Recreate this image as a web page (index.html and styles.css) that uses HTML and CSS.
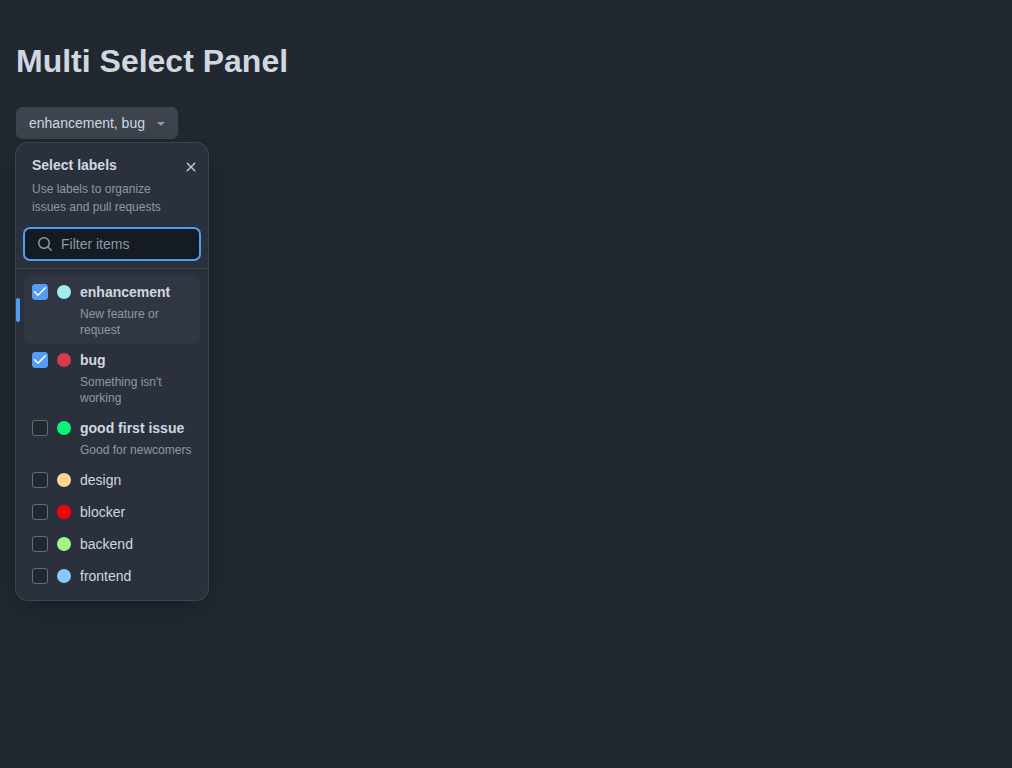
FILE: index.html
```html
<!DOCTYPE html>
<html lang="en">
<head>
<meta charset="utf-8">
<meta name="viewport" content="width=device-width, initial-scale=1">
<title>Multi Select Panel</title>
<link rel="stylesheet" href="styles.css">
</head>
<body>
<main class="page">
  <h1 class="page-title">Multi Select Panel</h1>
  <div class="select">
    <button class="select-button" type="button" aria-haspopup="dialog" aria-expanded="true">
      <span>enhancement, bug</span>
      <svg class="icon" viewBox="0 0 16 16" aria-hidden="true"><path d="m4.427 7.427 3.396 3.396a.25.25 0 0 0 .354 0l3.396-3.396A.25.25 0 0 0 11.396 7H4.604a.25.25 0 0 0-.177.427Z"/></svg>
    </button>
    <section class="panel" role="dialog" aria-labelledby="panel-title" aria-describedby="panel-description">
      <header class="panel-header">
        <div class="panel-heading">
          <h2 class="panel-title" id="panel-title">Select labels</h2>
          <p class="panel-description" id="panel-description">Use labels to organize issues and pull requests</p>
        </div>
        <button class="close-button" type="button" aria-label="Close">
          <svg class="icon" viewBox="0 0 16 16" aria-hidden="true"><path d="M3.72 3.72a.75.75 0 0 1 1.06 0L8 6.94l3.22-3.22a.749.749 0 0 1 1.275.326.749.749 0 0 1-.215.734L9.06 8l3.22 3.22a.749.749 0 0 1-.326 1.275.749.749 0 0 1-.734-.215L8 9.06l-3.22 3.22a.751.751 0 0 1-1.042-.018.751.751 0 0 1-.018-1.042L6.94 8 3.72 4.78a.75.75 0 0 1 0-1.06Z"/></svg>
        </button>
      </header>
      <div class="filter">
        <svg class="icon" viewBox="0 0 16 16" aria-hidden="true"><path d="M10.68 11.74a6 6 0 0 1-7.922-8.982 6 6 0 0 1 8.982 7.922l3.04 3.04a.749.749 0 0 1-.326 1.275.749.749 0 0 1-.734-.215ZM11.5 7a4.499 4.499 0 1 0-8.997 0A4.499 4.499 0 0 0 11.5 7Z"/></svg>
        <input class="filter-input" type="text" placeholder="Filter items" aria-label="Filter items">
      </div>
      <ul class="items">
        <li><label class="item item-active">
          <span class="check"><input class="checkbox" type="checkbox" checked><svg class="check-mark" viewBox="0 0 16 16" aria-hidden="true"><path d="M2.6 7.8 6 11.2 13.4 3.8"/></svg></span>
          <span class="dot dot-enhancement"></span>
          <span class="item-text"><span class="item-name item-name-strong">enhancement</span><span class="item-description">New feature or request</span></span>
        </label></li>
        <li><label class="item">
          <span class="check"><input class="checkbox" type="checkbox" checked><svg class="check-mark" viewBox="0 0 16 16" aria-hidden="true"><path d="M2.6 7.8 6 11.2 13.4 3.8"/></svg></span>
          <span class="dot dot-bug"></span>
          <span class="item-text"><span class="item-name item-name-strong">bug</span><span class="item-description">Something isn't working</span></span>
        </label></li>
        <li><label class="item">
          <span class="check"><input class="checkbox" type="checkbox"></span>
          <span class="dot dot-good-first-issue"></span>
          <span class="item-text"><span class="item-name item-name-strong">good first issue</span><span class="item-description">Good for newcomers</span></span>
        </label></li>
        <li><label class="item">
          <span class="check"><input class="checkbox" type="checkbox"></span>
          <span class="dot dot-design"></span>
          <span class="item-text"><span class="item-name">design</span></span>
        </label></li>
        <li><label class="item">
          <span class="check"><input class="checkbox" type="checkbox"></span>
          <span class="dot dot-blocker"></span>
          <span class="item-text"><span class="item-name">blocker</span></span>
        </label></li>
        <li><label class="item">
          <span class="check"><input class="checkbox" type="checkbox"></span>
          <span class="dot dot-backend"></span>
          <span class="item-text"><span class="item-name">backend</span></span>
        </label></li>
        <li><label class="item">
          <span class="check"><input class="checkbox" type="checkbox"></span>
          <span class="dot dot-frontend"></span>
          <span class="item-text"><span class="item-name">frontend</span></span>
        </label></li>
      </ul>
    </section>
  </div>
</main>
</body>
</html>
```

FILE: styles.css
```css
* { box-sizing: border-box; }

body {
  margin: 0;
  background: #212830;
  color: #d1d7e0;
  font-family: "Liberation Sans", Arial, sans-serif;
  font-size: 14px;
  line-height: 20px;
}

button, input { font: inherit; color: inherit; }

.page {
  min-height: 100vh;
  padding: 37px 16px 16px;
}

.page-title {
  margin: 0 0 22px;
  font-size: 32px;
  line-height: 48px;
}

.icon {
  display: block;
  flex: none;
  width: 16px;
  height: 16px;
  fill: #9198a1;
}

.select { position: relative; width: fit-content; }

.select-button {
  display: flex;
  align-items: center;
  gap: 8px;
  height: 32px;
  padding: 0 8px 0 12px;
  border: 1px solid #3d444d;
  border-radius: 6px;
  background: #3d444d;
}

.panel {
  position: absolute;
  top: 100%;
  left: 0;
  width: 192px;
  margin-top: 4px;
  padding-top: 12px;
  border-radius: 12px;
  background: #2a313c;
  box-shadow: 0 0 0 1px #3d444d, 0 8px 24px 0 #01040940;
}

.panel-header {
  display: flex;
  align-items: flex-start;
  padding: 0 5px 12px 16px;
}

.panel-heading { flex: 1; min-width: 0; }

.panel-title {
  margin: 0 0 5px;
  font-size: 14px;
}

.panel-description {
  margin: 0;
  color: #9198a1;
  font-size: 12px;
  line-height: 18px;
}

.close-button {
  display: grid;
  place-items: center;
  flex: none;
  width: 24px;
  height: 24px;
  padding: 0;
  border: 0;
  background: none;
}

.close-button .icon { fill: #bdc4cd; }

.filter {
  display: flex;
  align-items: center;
  gap: 8px;
  height: 32px;
  margin: 0 8px 8px;
  padding: 0 13px;
  border-radius: 6px;
  outline: 2px solid #539bf5;
  outline-offset: -1px;
  background: #151b23;
}

.filter-input {
  flex: 1;
  min-width: 0;
  padding: 0;
  border: 0;
  outline: 0;
  background: none;
}

.filter-input::placeholder { color: #9198a1; opacity: 1; }

.items {
  margin: 0;
  padding: 7px 8px 8px;
  border-top: 1px solid #3d444d;
  list-style: none;
}

.item {
  position: relative;
  display: flex;
  gap: 8px;
  padding: 6px 8px;
  border-radius: 6px;
}

.item-active { background: #313742; }

.item-active::before {
  content: "";
  position: absolute;
  top: 50%;
  left: -8px;
  width: 4px;
  height: 24px;
  margin-top: -12px;
  border-radius: 2px;
  background: #539bf5;
}

.check {
  display: grid;
  place-items: center;
  flex: none;
  width: 16px;
  height: 20px;
}

.checkbox, .check-mark { grid-area: 1 / 1; }

.checkbox {
  appearance: none;
  width: 16px;
  height: 16px;
  margin: 0;
  border: 1px solid #656c76;
  border-radius: 3px;
  background: #212830;
}

.checkbox:checked { border-color: #539bf5; background: #539bf5; }

.check-mark {
  z-index: 1;
  width: 16px;
  height: 16px;
  fill: none;
  stroke: #ffffff;
  stroke-width: 1.5;
  stroke-linecap: round;
  stroke-linejoin: round;
  pointer-events: none;
}

.dot {
  flex: none;
  width: 14px;
  height: 14px;
  margin: 3px 1px;
  border-radius: 50%;
}

.dot-enhancement { background: #a2eeef; }
.dot-bug { background: #d73a4a; }
.dot-good-first-issue { background: #0cf478; }
.dot-design { background: #ffd78e; }
.dot-blocker { background: #ff0000; }
.dot-backend { background: #a4f287; }
.dot-frontend { background: #8dc6fc; }

.item-text {
  display: flex;
  flex: 1;
  flex-direction: column;
  gap: 4px;
  min-width: 0;
}

.item-name-strong { font-weight: 700; }

.item-description {
  color: #9198a1;
  font-size: 12px;
  line-height: 16px;
}
```
